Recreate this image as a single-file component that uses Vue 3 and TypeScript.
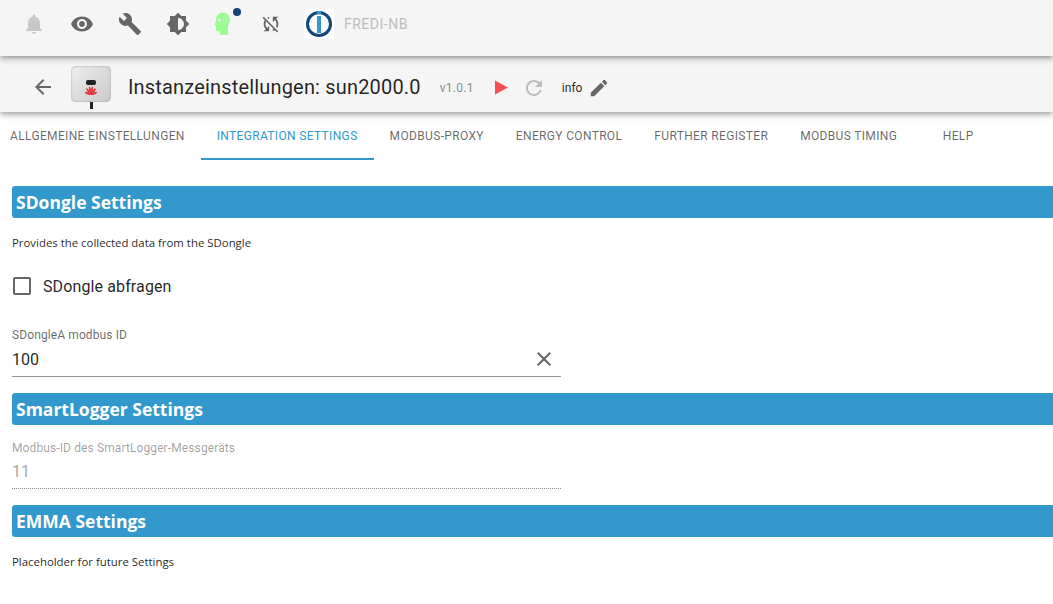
<script setup lang="ts">
const tabs = ['ALLGEMEINE EINSTELLUNGEN', 'INTEGRATION SETTINGS', 'MODBUS-PROXY', 'ENERGY CONTROL', 'FURTHER REGISTER', 'MODBUS TIMING', 'HELP']
</script>

<template>
  <div class="page">
    <header class="topbar">
      <svg class="ic bell" viewBox="0 0 24 24"><path d="M12 22c1.1 0 2-.9 2-2h-4c0 1.1.89 2 2 2zm6-6v-5c0-3.07-1.64-5.64-4.5-6.32V4c0-.83-.67-1.5-1.5-1.5s-1.5.67-1.5 1.5v.68C7.63 5.36 6 7.92 6 11v5l-2 2v1h16v-1l-2-2z"/></svg>
      <svg class="ic" viewBox="0 0 24 24"><path d="M12 4.5C7 4.5 2.73 7.61 1 12c1.73 4.39 6 7.5 11 7.5s9.27-3.11 11-7.5c-1.73-4.39-6-7.5-11-7.5zM12 17c-2.76 0-5-2.24-5-5s2.24-5 5-5 5 2.24 5 5-2.24 5-5 5zm0-8c-1.66 0-3 1.34-3 3s1.34 3 3 3 3-1.34 3-3-1.34-3-3-3z"/></svg>
      <svg class="ic" viewBox="0 0 24 24"><path d="M22.7 19l-9.1-9.1c.9-2.3.4-5-1.5-6.9-2-2-5-2.4-7.4-1.3L9 6 6 9 1.6 4.7C.4 7.1.9 10.1 2.9 12.1c1.9 1.9 4.6 2.4 6.9 1.5l9.1 9.1c.4.4 1 .4 1.4 0l2.3-2.3c.5-.4.5-1.1.1-1.4z"/></svg>
      <svg class="ic" viewBox="0 0 24 24"><path d="M20 15.31L23.31 12 20 8.69V4h-4.69L12 .69 8.69 4H4v4.69L.69 12 4 15.31V20h4.69L12 23.31 15.31 20H20v-4.69zM12 18V6c3.31 0 6 2.69 6 6s-2.69 6-6 6z"/></svg>
      <span class="head">
        <svg viewBox="0 0 20 26" width="20" height="26"><path fill="#9cfc96" d="M3 9 C3 4 6 1.500 10 1.500 C14 1.500 17 4.500 17 9 C17 12 15.800 14 15 15 V24 H7 V20 H4.500 C3.500 20 3 19 3 18 V15 L1.500 14 Z"/><circle cx="6.500" cy="9" r="1.600" fill="#e8f5e6"/></svg>
        <i class="dot"></i>
      </span>
      <svg class="ic sync" viewBox="0 0 24 24"><path d="M10 6.350V4.260c-.8.210-1.550.540-2.230.960l1.460 1.460c.250-.120.500-.240.770-.330zm-7.140-.940l2.360 2.360C4.450 8.990 4 10.440 4 12c0 2.210.910 4.200 2.360 5.640L4 20h6v-6l-2.240 2.240C6.680 15.150 6 13.660 6 12c0-1 .250-1.940.680-2.770l8.080 8.080c-.250.130-.500.250-.770.340v2.090c.8-.210 1.550-.540 2.230-.960l2.360 2.360 1.270-1.270L4.140 4.140 2.860 5.410zM20 4h-6v6l2.240-2.240C17.320 8.850 18 10.340 18 12c0 1-.250 1.940-.680 2.770l1.460 1.460C19.550 15.010 20 13.560 20 12c0-2.210-.910-4.200-2.360-5.640L20 4z"/></svg>
      <span class="logo">
        <svg viewBox="0 0 30 30" width="30" height="30"><circle cx="15" cy="15" r="11.500" fill="none" stroke="#144578" stroke-width="3"/><rect x="13" y="2" width="4" height="3.500" fill="#3399cc"/><rect x="13" y="7" width="4" height="17" fill="#3399cc"/></svg>
      </span>
      <span class="host">FREDI-NB</span>
    </header>

    <div class="titlebar">
      <svg class="ic back" viewBox="0 0 24 24"><path d="M20 11H7.830l5.590-5.590L12 4l-8 8 8 8 1.410-1.410L7.830 13H20v-2z"/></svg>
      <span class="adapter">
        <span class="inverter">
          <i class="led"></i>
          <svg viewBox="0 0 12 10" width="12" height="10">
            <g fill="#e0353b">
              <ellipse cx="4.900" cy="3.400" rx="1" ry="3" transform="rotate(-8 4.900 3.400)"/>
              <ellipse cx="7.100" cy="3.400" rx="1" ry="3" transform="rotate(8 7.100 3.400)"/>
              <ellipse cx="3.200" cy="5" rx="1" ry="3.200" transform="rotate(-32 3.200 5)"/>
              <ellipse cx="8.800" cy="5" rx="1" ry="3.200" transform="rotate(32 8.800 5)"/>
              <ellipse cx="2.600" cy="7.400" rx="1" ry="2.800" transform="rotate(-62 2.600 7.400)"/>
              <ellipse cx="9.400" cy="7.400" rx="1" ry="2.800" transform="rotate(62 9.400 7.400)"/>
              <rect x="5" y="5" width="2" height="4"/>
            </g>
          </svg>
        </span>
        <i class="cable"></i>
      </span>
      <h1>Instanzeinstellungen: sun2000.0</h1>
      <span class="version">v1.0.1</span>
      <svg class="play" viewBox="0 0 14 15" width="13" height="15"><path fill="#f44f52" d="M0 0 14 7.500 0 15Z"/></svg>
      <svg class="ic reload" viewBox="0 0 24 24"><path d="M17.650 6.350C16.200 4.900 14.210 4 12 4c-4.420 0-7.990 3.580-7.990 8s3.570 8 7.990 8c3.730 0 6.840-2.550 7.730-6h-2.080c-.82 2.330-3.040 4-5.650 4-3.310 0-6-2.690-6-6s2.690-6 6-6c1.660 0 3.140.69 4.220 1.780L13 11h7V4l-2.350 2.350z"/></svg>
      <span class="level">info</span>
      <svg class="ic edit" viewBox="0 0 24 24"><path d="M3 17.250V21h3.750L17.810 9.940l-3.750-3.750L3 17.250zM20.710 7.040c.39-.39.39-1.020 0-1.410l-2.340-2.340a.9959.9959 0 0 0-1.410 0l-1.830 1.830 3.750 3.750 1.830-1.830z"/></svg>
    </div>

    <nav class="tabs">
      <span v-for="(t, i) in tabs" :key="t" class="tab" :class="{ active: i === 1 }">{{ t }}</span>
    </nav>

    <main class="content">
      <h2 class="section first">SDongle Settings</h2>
      <p class="note">Provides the collected data from the SDongle</p>
      <label class="check"><i class="box"></i><span>SDongle abfragen</span></label>
      <div class="field">
        <span class="lbl">SDongleA modbus ID</span>
        <div class="val"><span>100</span>
          <svg class="clear" viewBox="0 0 24 24"><path d="M19 6.410L17.590 5 12 10.590 6.410 5 5 6.410 10.590 12 5 17.590 6.410 19 12 13.410 17.590 19 19 17.590 13.410 12z"/></svg>
        </div>
      </div>
      <h2 class="section logger">SmartLogger Settings</h2>
      <div class="field disabled">
        <span class="lbl">Modbus-ID des SmartLogger-Messgeräts</span>
        <div class="val"><span>11</span></div>
      </div>
      <h2 class="section emma">EMMA Settings</h2>
      <p class="note">Placeholder for future Settings</p>
    </main>
  </div>
</template>

<style scoped>
.page { width: 1053px; height: 604px; overflow: hidden; background: #fff; font-family: Roboto, sans-serif; color: rgba(0,0,0,.87); }
.topbar, .titlebar { background: #f5f5f5; display: flex; align-items: center; box-shadow: 0 2px 4px -1px rgba(0,0,0,.2), 0 4px 5px 0 rgba(0,0,0,.14), 0 1px 10px 0 rgba(0,0,0,.12); position: relative; box-sizing: border-box; }
.topbar { height: 56px; padding: 0 0 8px 22px; z-index: 2; }
.ic { width: 24px; height: 24px; fill: #666; flex: none; }
.topbar .ic { margin-right: 24px; }
.topbar .bell { fill: #c8c8c8; }
.topbar .sync { margin-right: 22px; width: 22px; height: 22px; fill: #666; }
.head { position: relative; width: 20px; height: 26px; margin: 0 27px 0 -1px; display: block; }
.head svg { display: block; }
.dot { position: absolute; width: 8px; height: 8px; border-radius: 50%; background: #144578; right: -8px; top: -3px; }
.logo { width: 30px; height: 30px; background: #fff; border-radius: 3px; display: block; flex: none; }
.logo svg { display: block; }
.host { margin-left: 10px; font-size: 14px; color: #bdbdbd; letter-spacing: .5px; }
.titlebar { height: 55px; margin-top: 1px; padding: 4px 0 0 31px; z-index: 1; }
.back { margin-right: 16px; }
.adapter { position: relative; width: 40px; height: 44px; display: block; flex: none; margin-top: 2px; }
.inverter { display: flex; flex-direction: column; align-items: center; justify-content: flex-end; width: 40px; height: 36px; padding-bottom: 6px; box-sizing: border-box; border-radius: 5px; background: linear-gradient(135deg, #eeeeee, #c9c9c9); box-shadow: inset 0 0 2px #999; }
.led { width: 10px; height: 5px; border-radius: 2px; background: #222; margin-bottom: 1px; }
.inverter svg { display: block; }
.cable { position: absolute; left: 19px; top: 36px; width: 3px; height: 7px; background: #222; }
h1 { margin: 0 0 0 17px; font-size: 20px; font-weight: 400; letter-spacing: .17px; white-space: nowrap; color: rgba(0,0,0,.87); }
.version { margin-left: 19px; font-size: 12px; color: #8a8a8a; letter-spacing: .3px; padding-top: 3px; }
.play { margin-left: 21px; margin-top: 2px; }
.reload { margin-left: 14px; margin-top: 2px; fill: #bdbdbd; }
.level { margin-left: 16px; font-size: 12px; padding-top: 2px; }
.edit { margin-left: 6px; margin-top: 2px; width: 22px; height: 22px; }
.tabs { display: flex; height: 48px; }
.tab { display: flex; align-items: center; justify-content: center; height: 48px; box-sizing: border-box; padding: 0 16px; font-size: 12px; font-weight: 400; color: rgba(0,0,0,.6); letter-spacing: .34px; white-space: nowrap; }
.tab.active { color: #3399cc; border-bottom: 2px solid #3399cc; padding-top: 2px; }
.tab:first-child { padding-left: 10px; }
.tab:last-child { padding: 0 16px; min-width: 90px; }
.content { padding-left: 12px; }
.section { height: 32px; margin: 0; padding-left: 4px; line-height: 33px; font-family: "Open Sans", sans-serif; font-size: 17.5px; font-weight: 700; color: #fff; background: #3399cc; border-radius: 3px 0 0 3px; }
.section.first { margin-top: 26px; }
.note { margin: 17px 0 0; font-family: "Open Sans", sans-serif; font-size: 11.4px; line-height: 16px; color: rgba(0,0,0,.87); }
.check { display: flex; align-items: center; margin-top: 23px; font-size: 16px; letter-spacing: .12px; height: 24px; }
.box { width: 14px; height: 14px; border: 2px solid #666; border-radius: 2px; margin: 0 12px 0 1px; }
.field { width: 549px; }
.check + .field { margin-top: 30px; }
.lbl { display: block; font-size: 12px; letter-spacing: .11px; line-height: 14px; color: rgba(0,0,0,.6); }
.val { display: flex; align-items: center; justify-content: space-between; height: 35px; box-sizing: border-box; border-bottom: 1px solid #949494; font-size: 16px; }
.clear { width: 24px; height: 24px; fill: #666; margin-right: 5px; }
.section.logger { margin-top: 16px; }
.logger + .field { margin-top: 16px; }
.disabled .lbl, .disabled .val { color: rgba(0,0,0,.38); }
.disabled .val { height: 34px; border-bottom: 1px dotted #8a8a8a; }
.section.emma { margin-top: 16px; }
</style>
